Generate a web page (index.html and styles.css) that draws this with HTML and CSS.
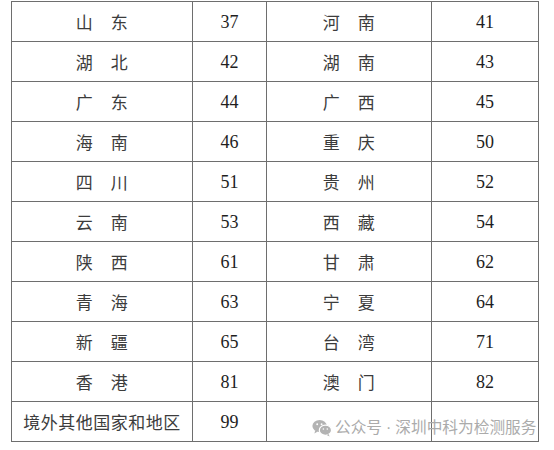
FILE: index.html
```html
<!DOCTYPE html>
<html lang="zh">
<head>
<meta charset="utf-8">
<link rel="stylesheet" href="styles.css">
</head>
<body>
<div class="page">
<table class="codes">
<colgroup>
<col class="c1"><col class="c2"><col class="c3"><col class="c4">
</colgroup>
<tbody>
<tr><td class="name">山　东</td><td class="num">37</td><td class="name">河　南</td><td class="num">41</td></tr>
<tr><td class="name">湖　北</td><td class="num">42</td><td class="name">湖　南</td><td class="num">43</td></tr>
<tr><td class="name">广　东</td><td class="num">44</td><td class="name">广　西</td><td class="num">45</td></tr>
<tr><td class="name">海　南</td><td class="num">46</td><td class="name">重　庆</td><td class="num">50</td></tr>
<tr><td class="name">四　川</td><td class="num">51</td><td class="name">贵　州</td><td class="num">52</td></tr>
<tr><td class="name">云　南</td><td class="num">53</td><td class="name">西　藏</td><td class="num">54</td></tr>
<tr><td class="name">陕　西</td><td class="num">61</td><td class="name">甘　肃</td><td class="num">62</td></tr>
<tr><td class="name">青　海</td><td class="num">63</td><td class="name">宁　夏</td><td class="num">64</td></tr>
<tr><td class="name">新　疆</td><td class="num">65</td><td class="name">台　湾</td><td class="num">71</td></tr>
<tr><td class="name">香　港</td><td class="num">81</td><td class="name">澳　门</td><td class="num">82</td></tr>
<tr><td class="name">境外其他国家和地区</td><td class="num">99</td><td class="name"></td><td class="num"></td></tr>
</tbody>
</table>
<div class="watermark">
<svg class="wx" viewBox="0 0 20 18" width="20" height="18" aria-hidden="true">
<ellipse cx="7.6" cy="7" rx="7.2" ry="6.1" fill="#b3b3b3"/>
<path d="M3.2 11.6 L2.4 14.6 L5.8 12.6 Z" fill="#b3b3b3"/>
<ellipse cx="13.4" cy="11.2" rx="6.1" ry="5.1" fill="#b3b3b3" stroke="#fff" stroke-width="1.2"/>
<path d="M16.6 15 L17.6 17.4 L14.6 16 Z" fill="#b3b3b3"/>
<circle cx="5.2" cy="5.2" r="0.95" fill="#fff"/>
<circle cx="9.6" cy="5.2" r="0.95" fill="#fff"/>
<circle cx="11.4" cy="10" r="0.8" fill="#fff"/>
<circle cx="15.3" cy="10" r="0.8" fill="#fff"/>
</svg>
<span class="wm-text">公众号<span class="wm-dot">·</span>深圳中科为检测服务</span>
</div>
</div>
</body>
</html>
```
FILE: styles.css
```css
html, body {
  margin: 0;
  padding: 0;
  background: #ffffff;
}

.page {
  position: relative;
  width: 554px;
  height: 450px;
  padding: 1px 0 0 11px;
  box-sizing: border-box;
}

.codes {
  border-collapse: collapse;
  table-layout: fixed;
  width: 527px;
}

.c1 { width: 181px; }
.c2 { width: 74px; }
.c3 { width: 165px; }
.c4 { width: 107px; }

.codes td {
  border: 1px solid #6e6e6e;
  height: 39px;
  padding: 0;
  text-align: center;
  vertical-align: middle;
}

.name {
  font-family: "Noto Sans CJK SC", "Noto Sans", sans-serif;
  font-size: 17px;
  color: #3c3c3c;
  letter-spacing: 0.5px;
  line-height: 20px;
}

.num {
  font-family: "Liberation Serif", "Times New Roman", serif;
  font-size: 18px;
  color: #1e1e1e;
  line-height: 20px;
}

.watermark {
  position: absolute;
  left: 312px;
  top: 418px;
  display: flex;
  align-items: center;
  gap: 3px;
  color: #ababab;
  font-family: "Noto Sans CJK SC", "Noto Sans", sans-serif;
  font-size: 15.7px;
  line-height: 18px;
  white-space: nowrap;
}

.wm-dot {
  font-family: "Liberation Sans", sans-serif;
  margin: 0 4px;
}

.wx {
  display: block;
  flex: none;
}
```
